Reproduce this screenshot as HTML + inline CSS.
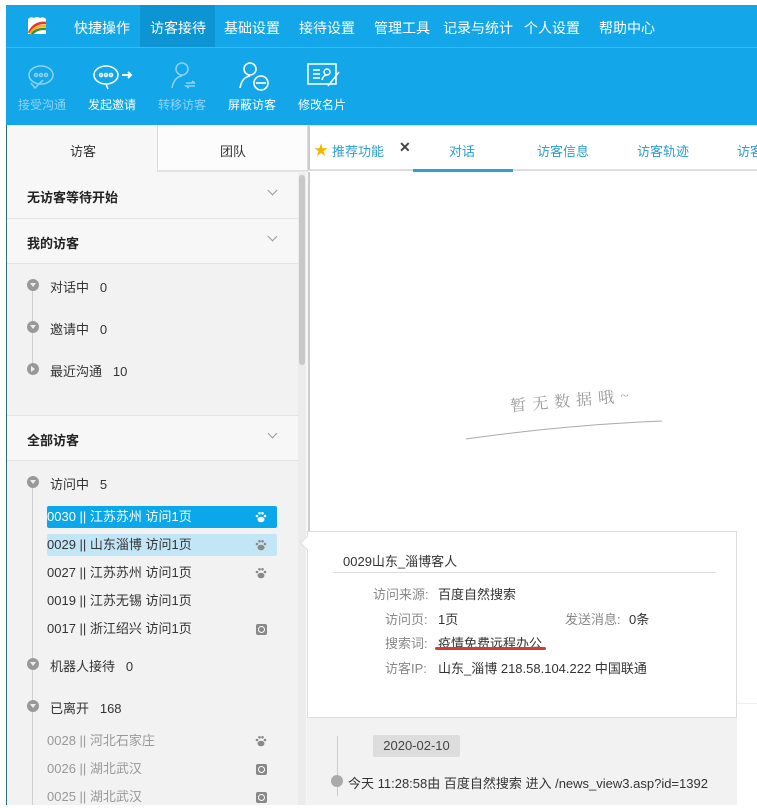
<!DOCTYPE html>
<html><head><meta charset="utf-8"><style>
*{margin:0;padding:0;box-sizing:border-box}
body{width:757px;height:805px;overflow:hidden;background:#fff;font-family:"Liberation Sans","Noto Sans CJK SC",sans-serif;font-size:13px;color:#333;position:relative}
.a{position:absolute;white-space:nowrap}
.nav{left:6px;top:5px;width:751px;height:42px;background:#13a7ea}
.nav span{position:absolute;top:13px;color:#fff;font-size:14px}
.tb{left:6px;top:47px;width:751px;height:78px;background:#13a7ea;border-top:1px solid #3bb8ef}
.tb .l{position:absolute;top:48px;font-size:12px;color:#fff}
.tb .d{color:#8fd2f3}
.side{left:6px;top:125px;width:302px;height:680px;background:#f7f7f7;border-left:1px solid #2a6f86}
.hr{position:absolute;left:0;width:291px;height:1px;background:#e3e3e3}
.b{font-weight:bold;font-size:13px;color:#222}
.chev{position:absolute;left:262px;width:7px;height:7px;border-right:1.3px solid #999;border-bottom:1.3px solid #999;transform:rotate(45deg)}
.dot{position:absolute;left:20px;width:12px;height:12px;border-radius:50%;background:#999}
.dot:after{content:"";position:absolute;left:3px;top:4px;border-left:3px solid transparent;border-right:3px solid transparent;border-top:4px solid #eee}
.dr:after{left:4px;top:3px;border-top:3px solid transparent;border-bottom:3px solid transparent;border-left:4px solid #eee;border-right:0}
.vl{position:absolute;left:25px;width:1px;background:#d0d0d0}
.row{position:absolute;left:40px;width:230px;height:22px;line-height:22px;font-size:13px;border-radius:2px}
.ic{position:absolute;right:10px;top:6px;width:11px;height:11px;border-radius:2px;background:#888}
.ic:after{content:"";position:absolute;left:2px;top:2px;width:5px;height:5px;border:1.2px solid #fff;border-radius:50%}
.paw{position:absolute;right:10px;top:5px}
</style></head><body>
<div class="a nav">
 <svg style="position:absolute;left:20px;top:11px" width="22" height="20" viewBox="0 0 22 20"><path d="M2 3 Q5 0 8 2 Q11 0 14 2 Q17 0 20 3 L20 18 L2 18Z" fill="#fff"/><path d="M3 17 Q8 6 20 7" stroke="#e23b2a" stroke-width="2.5" fill="none"/><path d="M4 18 Q9 9 20 10" stroke="#f5b51b" stroke-width="2.5" fill="none"/><path d="M6 18 Q11 12 20 13" stroke="#3a8f3a" stroke-width="2.5" fill="none"/></svg>
 <div style="position:absolute;left:134px;top:0;width:75px;height:42px;background:#0c95d2"></div>
 <span style="left:68px">快捷操作</span><span style="left:144px">访客接待</span><span style="left:218px">基础设置</span><span style="left:293px">接待设置</span><span style="left:368px">管理工具</span><span style="left:437px">记录与统计</span><span style="left:518px">个人设置</span><span style="left:593px">帮助中心</span>
</div>
<div class="a tb">
 <svg style="position:absolute;left:20px;top:16px" width="30" height="26" viewBox="0 0 30 26" fill="none" stroke="#8fd2f3" stroke-width="1.5"><ellipse cx="15" cy="11" rx="12" ry="9"/><circle cx="10" cy="11" r="1.5"/><circle cx="15" cy="11" r="1.5"/><circle cx="20" cy="11" r="1.5"/><path d="M5 19 l4 5 l8-8"/></svg>
 <svg style="position:absolute;left:86px;top:16px" width="44" height="26" viewBox="0 0 44 26" fill="none" stroke="#fff" stroke-width="1.5"><ellipse cx="14" cy="11" rx="12" ry="9"/><circle cx="9" cy="11" r="1.5"/><circle cx="14" cy="11" r="1.5"/><circle cx="19" cy="11" r="1.5"/><path d="M14 20 l2 5"/><path d="M30 11h9m-3-3l3 3-3 3" stroke-width="2"/></svg>
 <svg style="position:absolute;left:164px;top:12px" width="30" height="32" viewBox="0 0 30 32" fill="none" stroke="#8fd2f3" stroke-width="1.5"><circle cx="12" cy="9" r="6"/><path d="M2 28 Q4 17 12 16"/><path d="M16 23h9m-3-2l3 2M25 26h-9l3 2"/></svg>
 <svg style="position:absolute;left:232px;top:12px" width="34" height="32" viewBox="0 0 34 32" fill="none" stroke="#fff" stroke-width="1.6"><circle cx="12" cy="9" r="6"/><path d="M2 28 Q4 17 12 16"/><circle cx="23" cy="23" r="7"/><path d="M18 23h10"/></svg>
 <svg style="position:absolute;left:300px;top:14px" width="36" height="28" viewBox="0 0 36 28" fill="none" stroke="#fff" stroke-width="1.5"><rect x="2" y="2" width="28" height="20"/><path d="M7 8h7M7 12h7M7 16h7"/><circle cx="21" cy="10" r="3"/><path d="M16 18 Q17 13 21 13"/><path d="M22 24 L33 10"/></svg>
 <div class="l d" style="left:12px">接受沟通</div><div class="l" style="left:82px">发起邀请</div><div class="l d" style="left:152px">转移访客</div><div class="l" style="left:222px">屏蔽访客</div><div class="l" style="left:292px">修改名片</div>
</div>
<div class="a side">
 <div style="position:absolute;left:150px;top:0;width:151px;height:47px;background:#fcfcfc;border-left:1px solid #ddd;border-bottom:2px solid #e2e2e2;border-right:1px solid #ddd"></div>
 <div class="a" style="left:63px;top:16px;font-size:13px">访客</div>
 <div class="a" style="left:213px;top:16px;font-size:13px">团队</div>
 <div style="position:absolute;left:291px;top:48px;width:8px;height:632px;background:#ececec"></div>
 <div style="position:absolute;left:292px;top:50px;width:6px;height:190px;background:#c8c8c8;border-radius:3px"></div>
 <div class="a b" style="left:20px;top:62px">无访客等待开始</div><div class="chev" style="top:62px"></div>
 <div class="hr" style="top:93px"></div>
 <div class="a b" style="left:20px;top:108px">我的访客</div><div class="chev" style="top:108px"></div>
 <div class="hr" style="top:138px"></div>
 <div style="position:absolute;left:0;top:139px;width:291px;height:151px;background:#f3f2f2"></div>
 <div class="vl" style="top:160px;height:82px"></div>
 <div class="dot" style="top:154px"></div><div class="a" style="left:43px;top:152px">对话中&nbsp;&nbsp;&nbsp;0</div>
 <div class="dot" style="top:196px"></div><div class="a" style="left:43px;top:194px">邀请中&nbsp;&nbsp;&nbsp;0</div>
 <div class="dot dr" style="top:238px"></div><div class="a" style="left:43px;top:236px">最近沟通&nbsp;&nbsp;&nbsp;10</div>
 <div class="hr" style="top:290px"></div>
 <div class="a b" style="left:20px;top:305px">全部访客</div><div class="chev" style="top:305px"></div>
 <div class="hr" style="top:335px"></div>
 <div style="position:absolute;left:0;top:336px;width:291px;height:344px;background:#f3f2f2"></div>
 <div class="vl" style="top:358px;height:322px"></div>
 <div class="dot" style="top:351px"></div><div class="a" style="left:43px;top:349px">访问中&nbsp;&nbsp;&nbsp;5</div>
 <div class="row" style="top:381px;background:#0aa8ea;color:#fff">0030 || 江苏苏州 访问1页<svg class="paw" width="12" height="12" viewBox="0 0 12 12" fill="#fff"><ellipse cx="6" cy="8.5" rx="3.5" ry="2.8"/><circle cx="2" cy="5" r="1.3"/><circle cx="4.5" cy="2.3" r="1.3"/><circle cx="7.5" cy="2.3" r="1.3"/><circle cx="10" cy="5" r="1.3"/></svg></div>
 <div class="row" style="top:409px;background:#c3e6f6">0029 || 山东淄博 访问1页<svg class="paw" width="12" height="12" viewBox="0 0 12 12" fill="#888"><ellipse cx="6" cy="8.5" rx="3.5" ry="2.8"/><circle cx="2" cy="5" r="1.3"/><circle cx="4.5" cy="2.3" r="1.3"/><circle cx="7.5" cy="2.3" r="1.3"/><circle cx="10" cy="5" r="1.3"/></svg></div>
 <div class="row" style="top:437px">0027 || 江苏苏州 访问1页<svg class="paw" width="12" height="12" viewBox="0 0 12 12" fill="#888"><ellipse cx="6" cy="8.5" rx="3.5" ry="2.8"/><circle cx="2" cy="5" r="1.3"/><circle cx="4.5" cy="2.3" r="1.3"/><circle cx="7.5" cy="2.3" r="1.3"/><circle cx="10" cy="5" r="1.3"/></svg></div>
 <div class="row" style="top:465px">0019 || 江苏无锡 访问1页</div>
 <div class="row" style="top:493px">0017 || 浙江绍兴 访问1页<span class="ic"></span></div>
 <div class="dot" style="top:533px"></div><div class="a" style="left:43px;top:531px">机器人接待&nbsp;&nbsp;&nbsp;0</div>
 <div class="dot" style="top:575px"></div><div class="a" style="left:43px;top:573px">已离开&nbsp;&nbsp;&nbsp;168</div>
 <div class="row" style="top:605px;color:#999">0028 || 河北石家庄<svg class="paw" width="12" height="12" viewBox="0 0 12 12" fill="#888"><ellipse cx="6" cy="8.5" rx="3.5" ry="2.8"/><circle cx="2" cy="5" r="1.3"/><circle cx="4.5" cy="2.3" r="1.3"/><circle cx="7.5" cy="2.3" r="1.3"/><circle cx="10" cy="5" r="1.3"/></svg></div>
 <div class="row" style="top:633px;color:#999">0026 || 湖北武汉<span class="ic"></span></div>
 <div class="row" style="top:661px;color:#999">0025 || 湖北武汉<span class="ic"></span></div>
</div>
<div class="a" style="left:308px;top:125px;width:449px;height:46px;border-top:1px solid #bfe9f7;border-bottom:2px solid #ddd;border-left:2px solid #ccc"></div>
<div class="a" style="left:314px;top:140px;color:#f5b400;font-size:14px">★</div>
<div class="a" style="left:332px;top:141px;color:#2a9fd0">推荐功能</div>
<div class="a" style="left:399px;top:139px;color:#444;font-weight:bold;font-size:14px">✕</div>
<div class="a" style="left:449px;top:141px;color:#2a9fd0">对话</div>
<div class="a" style="left:413px;top:169px;width:100px;height:3px;background:#2aa3d3"></div>
<div class="a" style="left:537px;top:141px;color:#2a9fd0">访客信息</div>
<div class="a" style="left:637px;top:141px;color:#2a9fd0">访客轨迹</div>
<div class="a" style="left:737px;top:141px;color:#2a9fd0">访客</div>
<div class="a" style="left:308px;top:172px;width:2px;height:633px;background:#ccc"></div>
<div class="a" style="left:510px;top:388px;color:#999;font-size:16px;letter-spacing:6px;transform:rotate(-5deg);font-family:'Noto Serif CJK SC',serif">暂无数据哦~</div>
<svg class="a" style="left:464px;top:415px" width="200" height="26"><path d="M2 24 Q100 10 198 6" stroke="#aaa" fill="none"/></svg>
<div class="a" style="left:307px;top:717px;width:430px;height:88px;background:#f2f2f2"></div>
<div class="a" style="left:737px;top:703px;width:20px;height:1px;background:#eee"></div>
<div class="a" style="left:307px;top:531px;width:430px;height:187px;background:#fff;border:1px solid #ddd"></div>
<div class="a" style="left:302px;top:538px;width:10px;height:10px;background:#fff;border-left:1px solid #ddd;border-bottom:1px solid #ddd;transform:rotate(45deg)"></div>
<div class="a" style="left:343px;top:551px;color:#333">0029山东_淄博客人</div>
<div class="a" style="left:333px;top:572px;width:383px;height:1px;background:#ddd"></div>
<div class="a" style="left:373px;top:584px;color:#888">访问来源:</div><div class="a" style="left:438px;top:584px">百度自然搜索</div>
<div class="a" style="left:385px;top:609px;color:#888">访问页:</div><div class="a" style="left:438px;top:609px">1页</div>
<div class="a" style="left:565px;top:609px;color:#888">发送消息:</div><div class="a" style="left:629px;top:609px">0条</div>
<div class="a" style="left:385px;top:633px;color:#888">搜索词:</div><div class="a" style="left:438px;top:633px;text-decoration:underline">疫情免费远程办公</div>
<div class="a" style="left:435px;top:647px;width:111px;height:3px;border-radius:2px;background:#d83a3a"></div>
<div class="a" style="left:385px;top:658px;color:#888">访客IP:</div><div class="a" style="left:438px;top:658px">山东_淄博 218.58.104.222 中国联通</div>
<div class="a" style="left:337px;top:736px;width:1px;height:60px;background:#ccc"></div>
<div class="a" style="left:373px;top:735px;width:87px;height:22px;background:#ddd;border-radius:2px;text-align:center;line-height:22px;color:#444">2020-02-10</div>
<div class="a" style="left:331px;top:775px;width:12px;height:12px;border-radius:50%;background:#aaa"></div>
<div class="a" style="left:348px;top:773px;color:#333">今天 11:28:58由 百度自然搜索 进入 /news_view3.asp?id=1392</div>
</body></html>
